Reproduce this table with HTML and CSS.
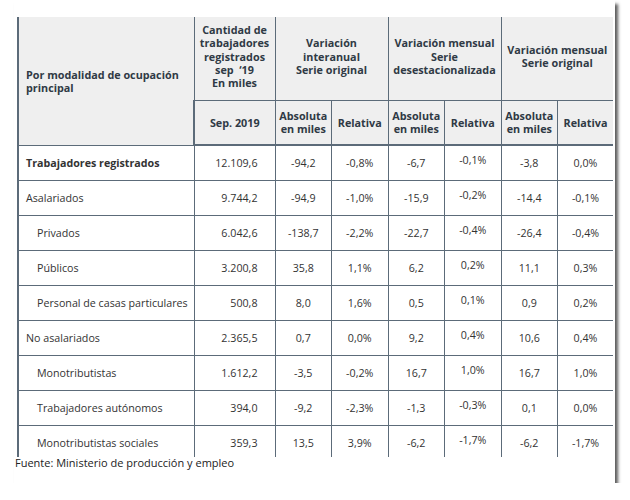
FILE: index.html
```html
<!DOCTYPE html>
<html lang="es">
<head>
<meta charset="utf-8">
<link rel="stylesheet" href="styles.css">
</head>
<body>
<div class="paper">
  <div class="clip">
    <table class="data">
      <colgroup>
        <col class="c-label"><col class="c-qty">
        <col class="c-n"><col class="c-n"><col class="c-n"><col class="c-n"><col class="c-n"><col class="c-n">
      </colgroup>
      <thead>
        <tr class="h1">
          <th rowspan="2" class="lead">Por modalidad de ocupación principal</th>
          <th>Cantidad de trabajadores registrados sep &nbsp;‘19<br>En miles</th>
          <th colspan="2">Variación<br>interanual<br>Serie original</th>
          <th colspan="2">Variación mensual<br>Serie<br>desestacionalizada</th>
          <th colspan="2">Variación mensual<br>Serie original</th>
        </tr>
        <tr class="h2">
          <th>Sep. 2019</th>
          <th>Absoluta<br>en miles</th>
          <th>Relativa</th>
          <th>Absoluta<br>en miles</th>
          <th>Relativa</th>
          <th>Absoluta<br>en miles</th>
          <th>Relativa</th>
        </tr>
      </thead>
      <tbody>
        <tr class="total"><td class="lbl">Trabajadores registrados</td><td class="qty">12.109,6</td><td>-94,2</td><td>-0,8%</td><td>-6,7</td><td class="up">-0,1%</td><td>-3,8</td><td>0,0%</td></tr>
        <tr><td class="lbl">Asalariados</td><td class="qty">9.744,2</td><td>-94,9</td><td>-1,0%</td><td>-15,9</td><td class="up">-0,2%</td><td>-14,4</td><td>-0,1%</td></tr>
        <tr><td class="lbl sub">Privados</td><td class="qty">6.042,6</td><td>-138,7</td><td>-2,2%</td><td>-22,7</td><td class="up">-0,4%</td><td>-26,4</td><td>-0,4%</td></tr>
        <tr><td class="lbl sub">Públicos</td><td class="qty">3.200,8</td><td>35,8</td><td>1,1%</td><td>6,2</td><td class="up">0,2%</td><td>11,1</td><td>0,3%</td></tr>
        <tr><td class="lbl sub">Personal de casas particulares</td><td class="qty">500,8</td><td>8,0</td><td>1,6%</td><td>0,5</td><td class="up">0,1%</td><td>0,9</td><td>0,2%</td></tr>
        <tr><td class="lbl">No asalariados</td><td class="qty">2.365,5</td><td>0,7</td><td>0,0%</td><td>9,2</td><td class="up">0,4%</td><td>10,6</td><td>0,4%</td></tr>
        <tr><td class="lbl sub">Monotributistas</td><td class="qty">1.612,2</td><td>-3,5</td><td>-0,2%</td><td>16,7</td><td class="up">1,0%</td><td>16,7</td><td>1,0%</td></tr>
        <tr><td class="lbl sub">Trabajadores autónomos</td><td class="qty">394,0</td><td>-9,2</td><td>-2,3%</td><td>-1,3</td><td class="up">-0,3%</td><td>0,1</td><td>0,0%</td></tr>
        <tr class="last"><td class="lbl sub">Monotributistas sociales</td><td class="qty">359,3</td><td>13,5</td><td>3,9%</td><td>-6,2</td><td class="up">-1,7%</td><td>-6,2</td><td>-1,7%</td></tr>
      </tbody>
    </table>
  </div>
  <p class="source">Fuente: Ministerio de producción y empleo</p>
</div>
</body>
</html>
```

FILE: styles.css
```css
html, body {
  margin: 0;
  padding: 0;
  background: #ffffff;
}

body {
  font-family: "Open Sans", "DejaVu Sans", sans-serif;
  color: #333;
}

.paper {
  margin-left: 14px;
  width: 601px;
  height: 483px;
  background: #fff;
  box-shadow: 3px 4px 3px rgba(40, 40, 40, 0.75);
  padding: 17px 0 0 3px;
  box-sizing: border-box;
}

.clip {
  width: 596px;
  height: 440px;
  overflow: hidden;
}

.data {
  border-collapse: collapse;
  table-layout: fixed;
  width: 596px;
  font-size: 10.7px;
}

.c-label { width: 176px; }
.c-qty { width: 81px; }
.c-n { width: 56.5px; }

.data th,
.data td {
  border: 1px solid #5c6b79;
  padding: 0;
}

.data th:first-child,
.data td:first-child {
  border-left: 2px solid #5c6b79;
}

.data tr th:last-child,
.data tr td:last-child {
  border-right: 2px solid #5c6b79;
}

.data thead th {
  background: #efefef;
  color: #2f3a45;
  font-size: 10.8px;
  font-weight: 700;
  line-height: 13.2px;
  text-align: center;
  vertical-align: middle;
}

.data thead tr:first-child th {
  border-top: none;
}

.data thead tr.h2 th {
  border-bottom: 2px solid #5c6b79;
}

.h1 { height: 83px; }
.h1 th { padding-bottom: 4px; }
.h1 th.lead { text-align: left; padding: 0 6px 0 7px; }
.h2 { height: 45px; }

.data tbody tr { height: 35px; }

.data td {
  text-align: center;
  vertical-align: middle;
  color: #333;
  white-space: nowrap;
}

.data td.lbl { text-align: left; padding-left: 7px; }
.data td.lbl.sub { padding-left: 18px; }
.data td.qty { text-align: right; padding-right: 17px; }
.data td.up { padding-bottom: 6px; }

.total .lbl { font-weight: 700; }

.data tr.last td { border-bottom: none; }

.source {
  margin: 0;
  padding: 0;
  font-size: 11px;
  line-height: 14px;
  color: #222;
  margin-left: -2px;
  margin-top: -1px;
}
```
